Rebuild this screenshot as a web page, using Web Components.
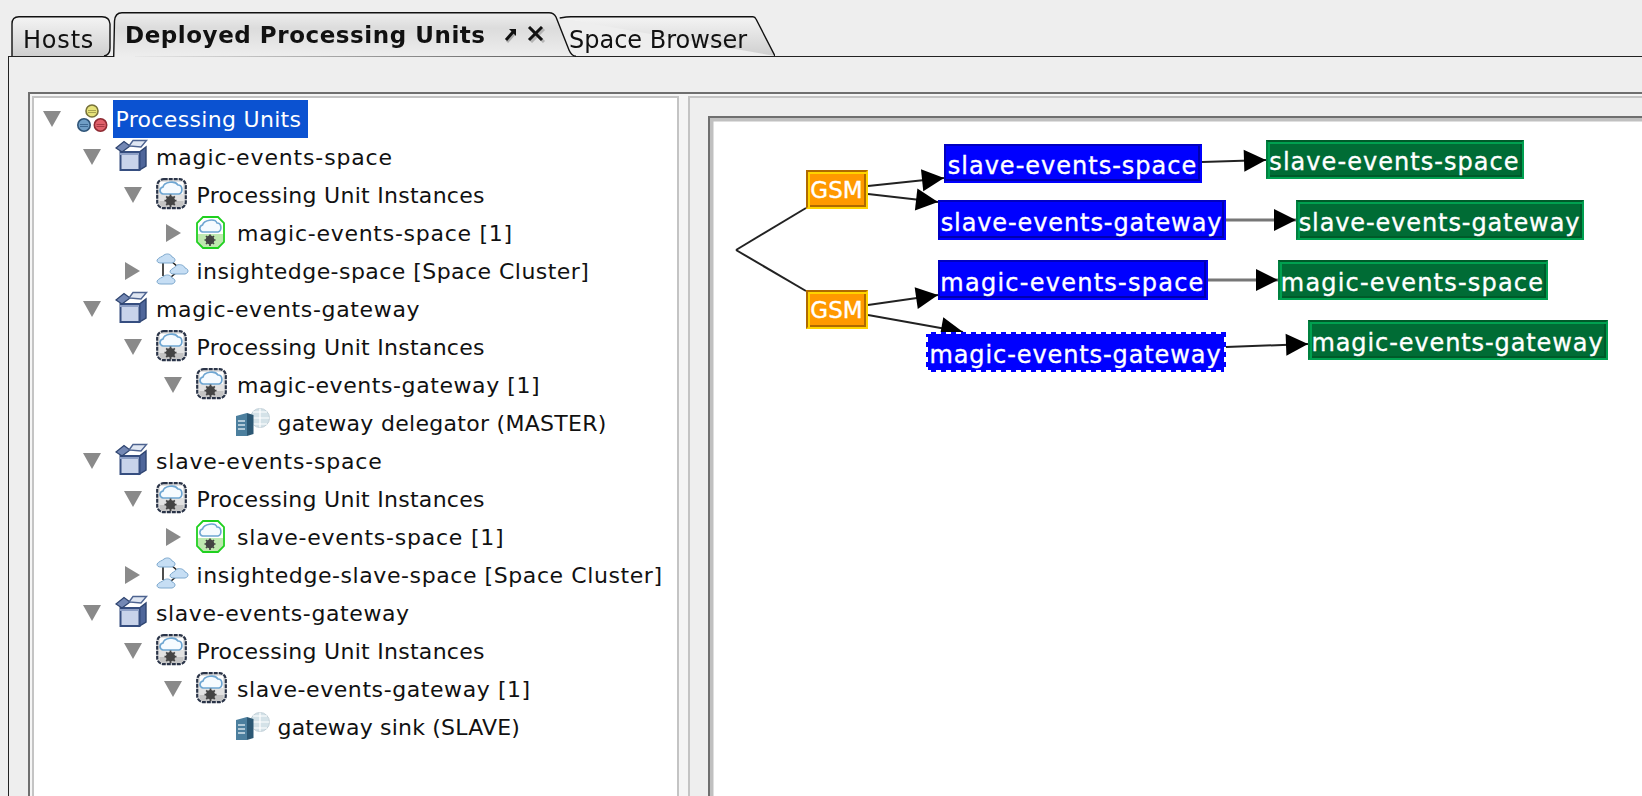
<!DOCTYPE html>
<html>
<head>
<meta charset="utf-8">
<title>Deployed Processing Units</title>
<style>
  html, body { margin: 0; height: 100%; overflow: hidden; background: #eeeeee; }
  body { font-family: "DejaVu Sans", "Liberation Sans", sans-serif; color: #111; }
</style>
</head>
<body>
<admin-window>
  <ui-tab slot="tabs" shape="rounded" width="100" height="40" pad="12">Hosts</ui-tab>
  <ui-tab slot="tabs" shape="active" width="463" height="45" pad="12" active>Deployed Processing Units</ui-tab>
  <ui-tab slot="tabs" shape="slant" width="216" height="40" pad="10">Space Browser</ui-tab>
  <unit-tree slot="tree">
    <tree-row level="0" arrow="down" icon="root" selected style="--track:.32px">Processing Units</tree-row>
    <tree-row level="1" arrow="down" icon="box" style="--track:.85px">magic-events-space</tree-row>
    <tree-row level="2" arrow="down" icon="pu" style="--track:.28px">Processing Unit Instances</tree-row>
    <tree-row level="3" arrow="right" icon="pu-green" style="--track:.73px">magic-events-space [1]</tree-row>
    <tree-row level="2" arrow="right" icon="cluster">insightedge-space [Space Cluster]</tree-row>
    <tree-row level="1" arrow="down" icon="box" style="--track:.65px">magic-events-gateway</tree-row>
    <tree-row level="2" arrow="down" icon="pu" style="--track:.28px">Processing Unit Instances</tree-row>
    <tree-row level="3" arrow="down" icon="pu" style="--track:.58px">magic-events-gateway [1]</tree-row>
    <tree-row level="4" icon="gateway" style="--track:.29px">gateway delegator (MASTER)</tree-row>
    <tree-row level="1" arrow="down" icon="box" style="--track:.8px">slave-events-space</tree-row>
    <tree-row level="2" arrow="down" icon="pu" style="--track:.28px">Processing Unit Instances</tree-row>
    <tree-row level="3" arrow="right" icon="pu-green" style="--track:.78px">slave-events-space [1]</tree-row>
    <tree-row level="2" arrow="right" icon="cluster" style="--track:.58px">insightedge-slave-space [Space Cluster]</tree-row>
    <tree-row level="1" arrow="down" icon="box" style="--track:.6px">slave-events-gateway</tree-row>
    <tree-row level="2" arrow="down" icon="pu" style="--track:.28px">Processing Unit Instances</tree-row>
    <tree-row level="3" arrow="down" icon="pu" style="--track:.58px">slave-events-gateway [1]</tree-row>
    <tree-row level="4" icon="gateway" style="--track:.19px">gateway sink (SLAVE)</tree-row>
  </unit-tree>
  <flow-diagram slot="diagram"></flow-diagram>
</admin-window>
<script>
class AdminWindow extends HTMLElement {
  constructor() {
    super();
    this.attachShadow({ mode: 'open' });
    this.shadowRoot.innerHTML = `
      <style>
        :host { display: block; height: 796px; overflow: hidden; filter: blur(0.35px); }
        .strip { display: flex; align-items: flex-end; height: 56px; padding-left: 11px; position: relative; z-index: 1; }
        .panel { margin-left: 8px; height: 739px; border-left: 1.5px solid #222; border-top: 1px solid #222; padding: 35px 0 0 18.5px; }
        .split { display: grid; grid-template-columns: 647px 1fr; column-gap: 9px; height: 704px; background: #f5f5f5; border-top: 2px solid #6f6f6f; border-left: 2px solid #6f6f6f; padding: 2px 0 0 2px; }
        .pane { background: #fff; border: 2px solid #c4c4c4; border-bottom: 0; overflow: hidden; }
        .right { background: #eeeeee; border-right: 0; padding: 18px 0 0 18px; }
        .inner { background: #fff; height: 100%; border-top: 2px solid #6f6f6f; border-left: 2px solid #6f6f6f; box-shadow: inset 3.5px 3.5px 0 #c0c0c0, inset 2px 2px 0 #eeeeee; overflow: hidden; }
      </style>
      <div class="strip"><slot name="tabs"></slot></div>
      <div class="panel">
        <div class="split">
          <div class="pane"><slot name="tree"></slot></div>
          <div class="pane right"><div class="inner"><slot name="diagram"></slot></div></div>
        </div>
      </div>`;
  }
}

class UiTab extends HTMLElement {
  constructor() {
    super();
    this.attachShadow({ mode: 'open' });
  }
  connectedCallback() {
    const w = +this.getAttribute('width');
    const h = +this.getAttribute('height');
    const pad = this.getAttribute('pad');
    const shape = this.getAttribute('shape');
    const active = this.hasAttribute('active');
    const paths = {
      rounded: `M1 ${h} V8 Q1 0.7 8 0.7 H91 Q98.5 0.7 99 8 V32 Q99 39 93 ${h}`,
      active: `M0.7 ${h} L1.5 9 Q2 0.7 9 0.7 H436 Q441 0.7 443 5 L456 38 Q458.5 44 463 44.3`,
      slant: `M0.7 2 Q8 0.7 12 0.7 H194 Q196 0.7 197 3 L${w} ${h}`
    };
    let icons = '';
    if (active) {
      icons = `
        <svg class="pin" width="14" height="16" viewBox="0 0 14 16">
          <path d="M3 15 L11 6" stroke="#aaa" stroke-width="3"/>
          <path d="M2 13 L9 5" stroke="#111" stroke-width="3"/>
          <path d="M5 2 H12 V9 Z" fill="#111"/>
        </svg>
        <svg class="close" width="20" height="17" viewBox="0 0 20 17">
          <path d="M4 3 L17 16 M17 3 L4 16" stroke="#b4b4b4" stroke-width="3"/>
          <path d="M2 1 L15 14 M15 1 L2 14" stroke="#111" stroke-width="3"/>
        </svg>`;
    }
    this.shadowRoot.innerHTML = `
      <style>
        :host { display: block; position: relative; flex: none; box-sizing: border-box; width: ${w}px; height: ${h}px; padding-left: ${pad}px; }
        :host([active]) { z-index: 2; margin: 0 -17px -1px 2px; }
        svg.bg { position: absolute; left: 0; top: 0; }
        .in { position: relative; display: flex; align-items: center; height: 100%; font-size: 24px; white-space: nowrap; color: #111; padding-top: 7px; box-sizing: border-box; }
        :host([shape="rounded"]) .in { letter-spacing: 0.8px; }
        :host([active]) .in { font-weight: bold; font-size: 23px; letter-spacing: 0.55px; height: 44px; padding-top: 2px; padding-bottom: 1px; }
        .pin { margin-left: 18px; }
        .close { margin-left: 9px; }
      </style>
      <svg class="bg" width="${w}" height="${h}">
        <defs>
          <linearGradient id="g" x1="0" y1="0" x2="0" y2="1">
            ${active
              ? '<stop offset="0" stop-color="#eeeeee"/><stop offset="0.35" stop-color="#dcdcdc"/><stop offset="1" stop-color="#eeeeee"/>'
              : '<stop offset="0" stop-color="#f4f4f4"/><stop offset="1" stop-color="#cfcfcf"/>'}
          </linearGradient>
        </defs>
        <path d="${paths[shape]} Z" fill="url(#g)" stroke="none"/>
        <path d="${paths[shape]}" fill="none" stroke="#111" stroke-width="1.4"/>
      </svg>
      <div class="in"><slot></slot>${icons}</div>`;
  }
}

class UnitTree extends HTMLElement {
  constructor() {
    super();
    this.attachShadow({ mode: 'open' });
    this.shadowRoot.innerHTML = `
      <style>:host { display: block; padding-top: 2px; }</style>
      <slot></slot>`;
  }
}

const TREE_ICONS = {
  root: `
    <circle cx="17" cy="8" r="6" fill="#e6e27a" stroke="#77723a" stroke-width="1.6"/>
    <path d="M13 7.5 H21 M13 9.5 H21" stroke="#a8a450" stroke-width="1"/>
    <circle cx="9" cy="22" r="6.2" fill="#6f9ec6" stroke="#2f5478" stroke-width="1.6"/>
    <path d="M5 21.5 H13 M5 23.5 H13" stroke="#3f6a94" stroke-width="1"/>
    <circle cx="25.5" cy="22" r="6.2" fill="#e0606a" stroke="#8e2a32" stroke-width="1.6"/>
    <path d="M21.5 21.5 H29.5 M21.5 23.5 H29.5" stroke="#a83a44" stroke-width="1"/>`,
  box: `
    <path d="M24.5 11 L31 6 V25 L24.5 29 Z" fill="#4f669a" stroke="#2e4470" stroke-width="1.4"/>
    <path d="M5.5 11 H24.5 V29 H5.5 Z" fill="#c8d3ea" stroke="#364e80" stroke-width="2"/>
    <path d="M5 12 H24 V14 H5 Z" fill="#8ea0c6"/>
    <path d="M1 7 L9 0.5 L15 5 L7 11 Z" fill="#7488b4" stroke="#2e4470" stroke-width="1.2"/>
    <path d="M14 5 L18 -0.5 H31.5 L26 6 Z" fill="#dfe6f2" stroke="#4d6390" stroke-width="1.4"/>`,
  pu: `
    <rect x="1.2" y="0.2" width="28.6" height="29" rx="6.5" fill="#e2e2e2" stroke="#2a3448" stroke-width="2.2" stroke-dasharray="4 1"/>
    <path d="M3.5 22 H27.5 V25 Q27 28 23 28 H8 Q4 28 3.5 25 Z" fill="#c4c4c4"/>
    <path d="M4 3 H27 V15 H4 Z" fill="#fff"/>
    <path d="M7 15 C3 14 3 9 7 8 C8 3 19 1 22 6 C27 6 27 14 23 15 Z" fill="#f6fbff" stroke="#6ea6d2" stroke-width="1.7"/>
    <circle cx="14.5" cy="21.7" r="4.6" fill="#444"/>
    <circle cx="14.5" cy="21.7" r="1.6" fill="#9a9a9a"/>
    <path d="M14.5 15.5 V28 M8.5 21.7 H20.5 M10.2 17.4 L18.8 26 M18.8 17.4 L10.2 26" stroke="#444" stroke-width="1.8"/>`,
  'pu-green': `
    <path d="M7 0 H22 L28 6 V25 L22 31 H7 L1 25 V6 Z" fill="#fff"/>
    <path d="M2 17 H27 V25 L22 30 H7 L2 25 Z" fill="#bfe8b0"/>
    <path d="M7 0 H22 L28 6 V25 L22 31 H7 L1 25 V6 Z" fill="none" stroke="#1fd01f" stroke-width="1.8"/>
    <path d="M6.5 15 C3 14 3 9 6.5 8 C8 3 19 1 21 6 C26 6 26 14 22 15 Z" fill="#f6fbff" stroke="#6ea6d2" stroke-width="1.6"/>
    <circle cx="14" cy="23" r="4.4" fill="#444"/>
    <circle cx="14" cy="23" r="1.7" fill="#a6d860"/>
    <path d="M14 17.5 V29 M8.5 23 H19.5 M10 19 L18 27 M18 19 L10 27" stroke="#444" stroke-width="1.7"/>`,
  cluster: `
    <path d="M7 8 V21 M15 6 L22 12 M15 22 L21 17" stroke="#222" stroke-width="1.6" fill="none"/>
    <path d="M1 5 C3 2 6 2 8 0 C11 -2 15 -1 16 2 C20 3 20 7 16 8 H5 C2 8 1 7 1 5 Z" fill="#c6def4" stroke="#7ea9ce" stroke-width="1"/>
    <path d="M14 16 C16 13 19 13 21 10 C24 9 28 10 29 13 C33 14 33 18 29 19 H18 C15 19 14 18 14 16 Z" fill="#c6def4" stroke="#7ea9ce" stroke-width="1"/>
    <path d="M1 26 C3 23 6 23 8 21 C11 19 15 20 16 23 C20 24 20 28 16 29 H5 C2 29 1 28 1 26 Z" fill="#c6def4" stroke="#7ea9ce" stroke-width="1"/>`,
  gateway: `
    <circle cx="23" cy="11" r="9.5" fill="#d4e2e8" stroke="#c2d0d8" stroke-width="1"/>
    <path d="M23 1.5 V20.5 M13.5 11 H32.5 M16 5 H30 M16 17 H30" stroke="#fff" stroke-width="1.2"/>
    <path d="M-1 9 L10 6 V29 L-1 29 Z" fill="#4c7f9e"/>
    <path d="M10 6 L16.5 8 V27 L10 29 Z" fill="#2c5874"/>
    <path d="M1 14 H8 M1 18 H8 M1 22 H8" stroke="#d4e4ec" stroke-width="1.6"/>`
};

class TreeRow extends HTMLElement {
  constructor() {
    super();
    this.attachShadow({ mode: 'open' });
  }
  connectedCallback() {
    const level = +this.getAttribute('level');
    const arrow = this.getAttribute('arrow');
    const icon = this.getAttribute('icon');
    let glyph = '';
    if (arrow == 'down') glyph = '<svg width="18" height="16"><path d="M0 0 H18 L9 16 Z" fill="#8a8a8a"/></svg>';
    if (arrow == 'right') glyph = '<svg width="15" height="18"><path d="M0 0 L15 9 L0 18 Z" fill="#8a8a8a"/></svg>';
    this.shadowRoot.innerHTML = `
      <style>
        :host { display: flex; align-items: center; height: 38px; padding-left: ${4 + level * 40.5}px; white-space: nowrap; font-size: 22px; letter-spacing: var(--track, 0.45px); color: #111; }
        .arrow { width: 28px; height: 38px; display: flex; align-items: center; justify-content: center; flex: none; }
        .icon { width: 31px; height: 32px; margin-left: 9px; flex: none; overflow: visible; }
        .label { display: block; height: 38px; margin-left: 7px; padding: 0 7px 0 3px; line-height: 40px; }
        :host([selected]) .label { background: #0b52d1; color: #fff; }
      </style>
      <span class="arrow">${glyph}</span>
      <svg class="icon" viewBox="0 0 31 32">${TREE_ICONS[icon]}</svg>
      <span class="label"><slot></slot></span>`;
  }
}

class FlowNode extends HTMLElement {
  constructor() {
    super();
    this.attachShadow({ mode: 'open' });
    this.shadowRoot.innerHTML = `
      <style>
        :host { position: absolute; box-sizing: border-box; display: flex; align-items: center; justify-content: center; padding-top: 5px; color: #fff; font-size: 24px; letter-spacing: var(--track, 0.9px); white-space: nowrap; overflow: hidden; -webkit-text-stroke: 0.35px #fff; }
        :host([kind="gsm"]) { background: #ff9900; border: 2px solid #ffd400; border-top-color: #b06a00; border-left-color: #b06a00; box-shadow: inset 2px 2px 0 #ffd400, inset -2px -2px 0 #b06a00; font-size: 23px; letter-spacing: 0; padding-top: 1px; }
        :host([kind="pu"]) { background: #0000ff; border: 2px solid #0000ff; border-top-color: #0000c0; border-left-color: #0000c0; box-shadow: inset -2px -2px 0 #0000b0; }
        :host([kind="pu"][selected]) {
          border: 0;
          box-shadow: none;
          background:
            repeating-linear-gradient(90deg, #fff 0 5px, transparent 5px 10px) left top / 100% 2px no-repeat,
            repeating-linear-gradient(90deg, #fff 0 5px, transparent 5px 10px) left bottom / 100% 2px no-repeat,
            repeating-linear-gradient(0deg, #fff 0 5px, transparent 5px 10px) left top / 2px 100% no-repeat,
            repeating-linear-gradient(0deg, #fff 0 5px, transparent 5px 10px) right top / 2px 100% no-repeat,
            #0000ff;
        }
        :host([kind="space"]) { background: #006c35; border: 2px solid #00a050; border-top-color: #005a2a; border-left-color: #00803f; box-shadow: inset 2px 2px 0 #00a050, inset -2px -2px 0 #005a2a; }
      </style>
      <slot></slot>`;
  }
}

// page coordinates from the reference, shifted to the canvas origin below
const ORIGIN = [710, 118];
const NODES = [
  ['gsm', 'GSM', 806, 170, 62, 39],
  ['gsm', 'GSM', 806, 290, 62, 39],
  ['pu', 'slave-events-space', 944, 144, 258, 39, false, '1px'],
  ['pu', 'slave-events-gateway', 938, 200, 288, 40],
  ['pu', 'magic-events-space', 938, 260, 270, 40, false, '1.25px'],
  ['pu', 'magic-events-gateway', 926, 332, 300, 40, true],
  ['space', 'slave-events-space', 1266, 140, 258, 39, false, '1.05px'],
  ['space', 'slave-events-gateway', 1296, 200, 288, 40],
  ['space', 'magic-events-space', 1278, 260, 270, 40, false, '1.2px'],
  ['space', 'magic-events-gateway', 1308, 320, 300, 40]
];
// x1 y1 x2 y2 colour width; head tip at x2 y2 when arrow is set
const EDGES = [
  [736, 250, 806, 208, '#222', 2, false],
  [736, 250, 806, 291, '#222', 2, false],
  [868, 186, 944, 178, '#222', 2, true],
  [868, 194, 938, 202, '#222', 2, true],
  [868, 305, 938, 295, '#222', 2, true],
  [868, 315, 963, 332, '#222', 2, true],
  [1202, 162, 1266, 160, '#222', 2, true],
  [1226, 220, 1296, 220, '#777', 3, true],
  [1208, 280, 1278, 280, '#777', 3, true],
  [1226, 347, 1308, 344, '#222', 2, true]
];

class FlowDiagram extends HTMLElement {
  constructor() {
    super();
    this.attachShadow({ mode: 'open' });
  }
  connectedCallback() {
    const [ox, oy] = ORIGIN;
    let lines = '';
    for (const [x1, y1, x2, y2, color, sw, head] of EDGES) {
      lines += `<line x1="${x1 - ox}" y1="${y1 - oy}" x2="${x2 - ox}" y2="${y2 - oy}" stroke="${color}" stroke-width="${sw}"/>`;
      if (head) {
        const a = Math.atan2(y2 - y1, x2 - x1) * 180 / Math.PI;
        lines += `<path d="M0 0 L-22 -11 L-22 11 Z" fill="#000" transform="translate(${x2 - ox} ${y2 - oy}) rotate(${a})"/>`;
      }
    }
    let nodes = '';
    for (const [kind, text, x, y, w, h, sel, track] of NODES) {
      const extra = track ? `--track:${track};` : '';
      nodes += `<flow-node kind="${kind}" ${sel ? 'selected' : ''} style="${extra}left:${x - ox}px;top:${y - oy}px;width:${w}px;height:${h}px">${text}</flow-node>`;
    }
    this.shadowRoot.innerHTML = `
      <style>
        :host { display: block; position: relative; height: 660px; }
        svg { position: absolute; left: 0; top: 0; }
      </style>
      <svg width="940" height="400">${lines}</svg>
      ${nodes}`;
  }
}

customElements.define('admin-window', AdminWindow);
customElements.define('ui-tab', UiTab);
customElements.define('unit-tree', UnitTree);
customElements.define('tree-row', TreeRow);
customElements.define('flow-node', FlowNode);
customElements.define('flow-diagram', FlowDiagram);
</script>
</body>
</html>
